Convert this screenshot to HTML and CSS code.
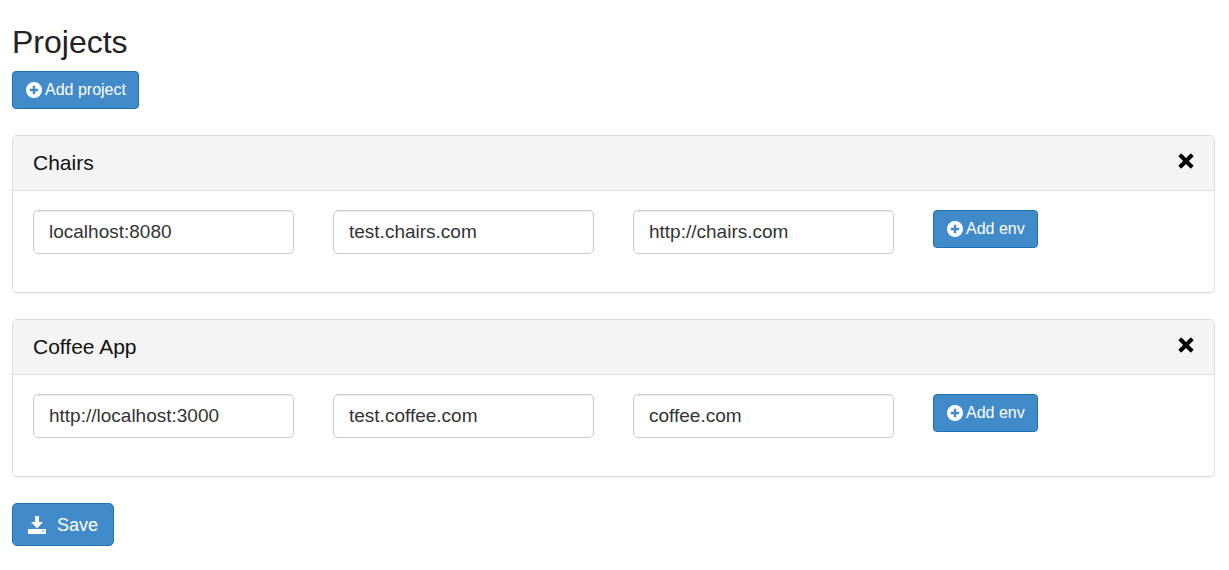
FILE: index.html
```html
<!DOCTYPE html>
<html lang="en">
<head>
<meta charset="utf-8">
<meta name="viewport" content="width=device-width, initial-scale=1">
<title>Projects</title>
<link rel="stylesheet" href="styles.css">
</head>
<body>
<svg class="sprite" aria-hidden="true">
  <symbol id="plus" viewBox="0 0 16 16"><path fill-rule="evenodd" d="M8 0a8 8 0 1 0 0 16A8 8 0 0 0 8 0ZM6.8 3.8h2.400v3h3v2.400h-3v3H6.800v-3h-3V6.800h3Z"/></symbol>
  <symbol id="cross" viewBox="0 0 16 16"><path d="M3.700.8 8 5.100 12.300.8Q12.800.3 13.300.8L15.200 2.700Q15.700 3.200 15.200 3.700L10.900 8l4.300 4.300q.5.500 0 1l-1.900 1.900q-.5.500-1 0L8 10.900l-4.300 4.300q-.5.500-1 0L.8 13.300q-.5-.5 0-1L5.100 8 .8 3.700Q.3 3.200.8 2.700L2.700.8q.5-.5 1 0Z"/></symbol>
  <symbol id="download" viewBox="0 0 18 18"><path fill-rule="evenodd" d="M7 0h4v6h4l-6 6.500L3 6h4ZM.5 13h17q.5 0 .5.500v4q0 .5-.5.500H.5q-.5 0-.5-.5v-4q0-.5.5-.5ZM14.500 14.500v1H16v-1Z"/></symbol>
</svg>
<main class="page">
  <h1 class="title">Projects</h1>
  <button class="btn" type="button"><svg class="icon"><use href="#plus"/></svg>Add project</button>
  <form class="projects">
    <section class="panel">
      <header class="panel-head">
        <h2 class="panel-title">Chairs</h2>
        <button class="remove" type="button" aria-label="Remove Chairs"><svg class="icon"><use href="#cross"/></svg></button>
      </header>
      <div class="envs">
        <input class="field" type="text" aria-label="Chairs environment 1" value="localhost:8080">
        <input class="field" type="text" aria-label="Chairs environment 2" value="test.chairs.com">
        <input class="field" type="text" aria-label="Chairs environment 3" value="http://chairs.com">
        <button class="btn" type="button"><svg class="icon"><use href="#plus"/></svg>Add env</button>
      </div>
    </section>
    <section class="panel">
      <header class="panel-head">
        <h2 class="panel-title">Coffee App</h2>
        <button class="remove" type="button" aria-label="Remove Coffee App"><svg class="icon"><use href="#cross"/></svg></button>
      </header>
      <div class="envs">
        <input class="field" type="text" aria-label="Coffee App environment 1" value="http://localhost:3000">
        <input class="field" type="text" aria-label="Coffee App environment 2" value="test.coffee.com">
        <input class="field" type="text" aria-label="Coffee App environment 3" value="coffee.com">
        <button class="btn" type="button"><svg class="icon"><use href="#plus"/></svg>Add env</button>
      </div>
    </section>
    <button class="btn btn-save" type="submit"><svg class="icon"><use href="#download"/></svg>Save</button>
  </form>
</main>
</body>
</html>
```
FILE: styles.css
```css
* { box-sizing: border-box; }
body {
  margin: 0;
  background: #fff;
  color: #222;
  font-family: "Liberation Sans", Arial, sans-serif;
}
button, input { font-family: inherit; }
.sprite { position: absolute; width: 0; height: 0; }
.page { padding: 24px 14px 22px 12px; }
.title {
  margin: 0 0 11px;
  font-size: 32px;
  line-height: 36px;
  font-weight: 400;
}
.icon { width: 16px; height: 16px; fill: currentColor; flex: none; }
.btn {
  display: inline-flex;
  align-items: center;
  justify-self: start;
  gap: 3px;
  height: 38px;
  padding: 0 12px 1px 13px;
  border: 1px solid #1c70b4;
  border-radius: 4px;
  background: #428bca;
  color: #fff;
  font-size: 16px;
  line-height: 20px;
  white-space: nowrap;
  vertical-align: top;
}
.projects { margin-top: 26px; }
.panel {
  margin-bottom: 26px;
  border: 1px solid #ddd;
  border-radius: 5px;
  box-shadow: 0 1px 1px rgba(0, 0, 0, .06);
}
.panel-head {
  display: flex;
  justify-content: space-between;
  align-items: flex-start;
  padding: 15px 20px;
  border-bottom: 1px solid #ddd;
  border-radius: 4px 4px 0 0;
  background: #f4f4f4;
}
.panel-title {
  margin: 0;
  color: #111;
  font-size: 21px;
  line-height: 24px;
  font-weight: 400;
}
.remove {
  display: flex;
  padding: 2px 0;
  border: 0;
  background: none;
  color: #000;
}
.envs {
  display: grid;
  grid-template-columns: repeat(4, minmax(0, 1fr));
  align-items: start;
  gap: 39px;
  padding: 19px 20px 38px;
}
.field {
  width: 100%;
  height: 44px;
  padding: 0 15px;
  border: 1px solid #ccc;
  border-radius: 5px;
  background: #fff;
  box-shadow: inset 0 1px 1px rgba(0, 0, 0, .08);
  color: #333;
  font-size: 19px;
}
.btn-save {
  gap: 11px;
  height: 43px;
  padding: 0 15px;
  border-radius: 5px;
  font-size: 18px;
}
.btn-save .icon { width: 18px; height: 18px; }
```
